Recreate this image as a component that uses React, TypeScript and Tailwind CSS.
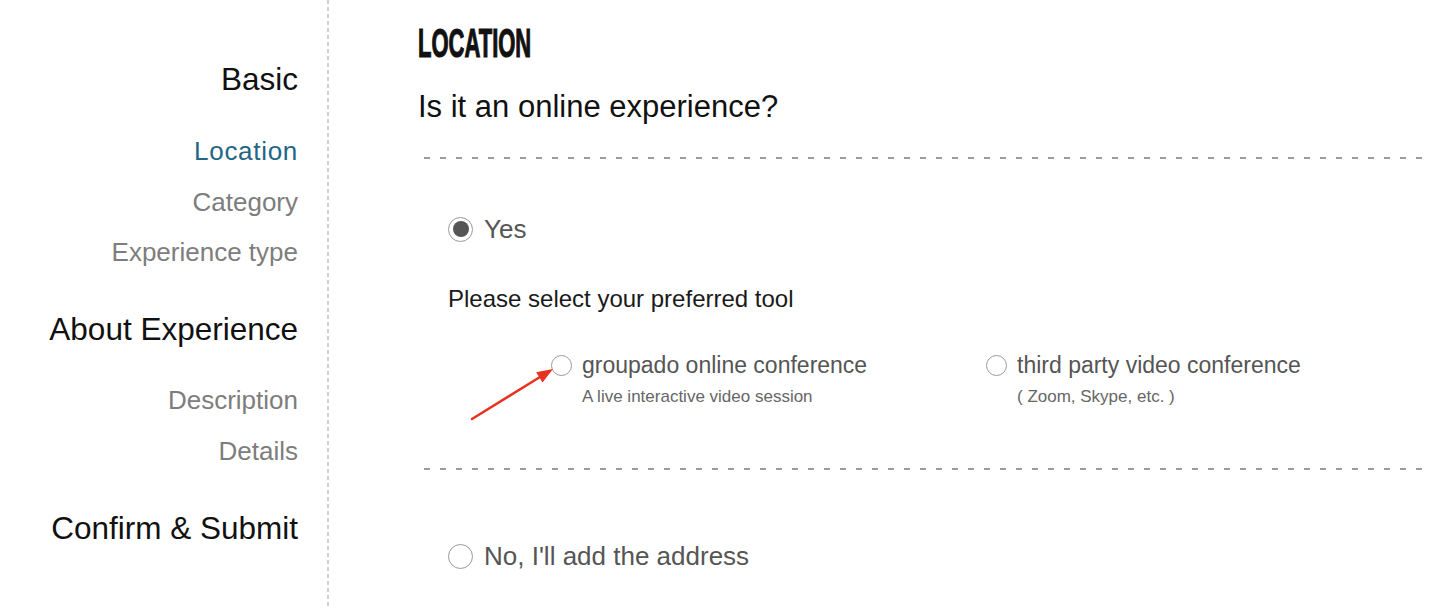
import React from 'react'

type Step = { label: string; kind: 'head' | 'sub'; active?: boolean; mt: string }

const steps: Step[] = [
  { label: 'Basic', kind: 'head', mt: 'mt-[61px]' },
  { label: 'Location', kind: 'sub', active: true, mt: 'mt-[29px]' },
  { label: 'Category', kind: 'sub', mt: 'mt-[1px]' },
  { label: 'Experience type', kind: 'sub', mt: 'mt-0' },
  { label: 'About Experience', kind: 'head', mt: 'mt-[34px]' },
  { label: 'Description', kind: 'sub', mt: 'mt-[28px]' },
  { label: 'Details', kind: 'sub', mt: 'mt-[1px]' },
  { label: 'Confirm & Submit', kind: 'head', mt: 'mt-[34px]' },
]

function Radio({ checked, size }: { checked?: boolean; size: 'lg' | 'sm' }) {
  const box = size === 'lg' ? 'h-[25px] w-[25px]' : 'h-[21px] w-[21px]'
  return (
    <span
      className={`${box} inline-flex shrink-0 items-center justify-center rounded-full border-[1.5px] border-[#9a9a9a] bg-white`}
    >
      {checked ? <span className="h-[16px] w-[16px] rounded-full bg-[#555]" /> : null}
    </span>
  )
}

function Dashes() {
  return (
    <div className="ml-[6px] h-[2px] w-full bg-[linear-gradient(to_right,#9c9c9c_6px,transparent_6px)] bg-[length:16px_2px]" />
  )
}

export default function App() {
  return (
    <div className="relative flex h-[608px] w-full overflow-hidden bg-white font-['Liberation_Sans',Arial,sans-serif]">
      {/* menu de gauche */}
      <aside className="flex w-[298px] shrink-0 flex-col items-end text-right">
        {steps.map(s =>
          s.kind === 'head' ? (
            <div key={s.label} className={`${s.mt} text-[31.5px] leading-[36px] text-[#111]`}>
              {s.label}
            </div>
          ) : (
            <div
              key={s.label}
              className={`${s.mt} text-[26px] leading-[50px] ${s.active ? 'tracking-[0.7px] text-[#1f6688]' : 'text-[#7d7d7d]'}`}
            >
              {s.label}
            </div>
          )
        )}
      </aside>

      <div className="ml-[29px] h-full w-[2px] shrink-0 bg-[linear-gradient(to_bottom,#cfcfcf_4px,transparent_4px)] bg-[length:2px_7px]" />

      <main className="flex min-w-0 flex-1 flex-col pl-[89px]">
        <h1 className="mt-[28px] origin-left scale-x-[0.55] whitespace-nowrap text-[40px] font-bold leading-[30px] text-[#111] [-webkit-text-stroke:1.2px_#111]">
          LOCATION
        </h1>
        <p className="mt-[31px] text-[31px] leading-[36px] text-[#111]">Is it an online experience?</p>

        <div className="mt-[32px]">
          <Dashes />
        </div>

        <label className="mt-[57px] flex items-center gap-[11px] pl-[30px]">
          <Radio checked size="lg" />
          <span className="text-[26px] leading-[26px] text-[#555]">Yes</span>
        </label>

        <p className="mt-[42px] pl-[30px] text-[24px] leading-[30px] text-[#1a1a1a]">
          Please select your preferred tool
        </p>

        <div className="mt-[37px] flex pl-[133px]">
          <div className="flex w-[435px] items-start gap-[10px]">
            <span className="mt-[4px]">
              <Radio size="sm" />
            </span>
            <div>
              <div className="text-[23px] leading-[28px] text-[#555]">groupado online conference</div>
              <div className="mt-[7px] text-[17px] leading-[22px] text-[#666]">A live interactive video session</div>
            </div>
          </div>
          <div className="flex items-start gap-[10px]">
            <span className="mt-[4px]">
              <Radio size="sm" />
            </span>
            <div>
              <div className="text-[23px] leading-[28px] text-[#555]">third party video conference</div>
              <div className="mt-[7px] text-[17px] leading-[22px] text-[#666]">( Zoom, Skype, etc. )</div>
            </div>
          </div>
        </div>

        <div className="mt-[60px]">
          <Dashes />
        </div>

        <label className="mt-[73px] flex items-center gap-[11px] pl-[30px]">
          <Radio size="lg" />
          <span className="text-[26px] leading-[26px] text-[#555]">No, I'll add the address</span>
        </label>
      </main>

      {/* flèche rouge d'annotation */}
      <svg className="absolute left-[465px] top-[362px] h-[63px] w-[95px]" viewBox="0 0 95 63" fill="none">
        <line x1="7" y1="57" x2="75" y2="15" stroke="#e8321f" strokeWidth="2.5" strokeLinecap="round" />
        <polygon points="88,7 77.5,20.5 71.2,10.3" fill="#e8321f" />
      </svg>
    </div>
  )
}
